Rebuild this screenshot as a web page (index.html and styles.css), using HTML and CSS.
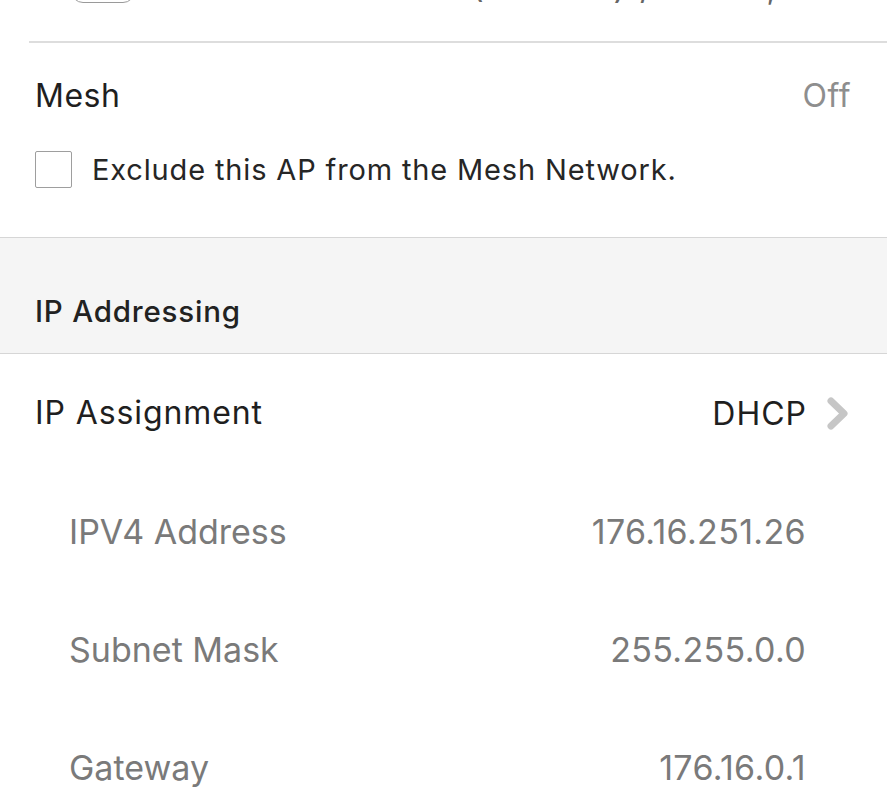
FILE: index.html
```html
<!DOCTYPE html>
<html>
<head>
<meta charset="utf-8">
<link rel="stylesheet" href="styles.css">
</head>
<body>
<div class="top-row">
  <div class="pill"></div>
  <div class="clipped-text">(2.4 GHz) / 5 GHz,</div>
</div>
<section class="mesh">
  <div class="mesh-head">
    <span class="title">Mesh</span>
    <span class="off">Off</span>
  </div>
  <label class="check-row">
    <span class="box"></span>
    <span class="check-label">Exclude this AP from the Mesh Network.</span>
  </label>
</section>
<div class="section-head">IP Addressing</div>
<div class="row main-row">
  <span class="title">IP Assignment</span>
  <span class="value">DHCP
    <svg class="chev" width="21" height="33" viewBox="0 0 21 33"><polyline points="4,4 17,16.5 4,29" fill="none" stroke="#c6c6c6" stroke-width="7" stroke-linecap="round" stroke-linejoin="round"/></svg>
  </span>
</div>
<div class="row sub-row"><span>IPV4 Address</span><span class="num">176.16.251.26</span></div>
<div class="row sub-row"><span>Subnet Mask</span><span class="num">255.255.0.0</span></div>
<div class="row sub-row"><span>Gateway</span><span class="num">176.16.0.1</span></div>
</body>
</html>
```
FILE: styles.css
```css
html, body {
  margin: 0;
  padding: 0;
  background: #ffffff;
  font-family: "Inter", "Noto Sans", sans-serif;
  color: #1f1f1f;
  overflow: hidden;
}
.top-row {
  height: 41px;
  margin-left: 29px;
  border-bottom: 2px solid #dddddd;
  display: flex;
  align-items: flex-start;
  overflow: hidden;
}
.pill {
  margin-left: 42px;
  margin-top: -37px;
  width: 62px;
  height: 38px;
  border: 1.5px solid #9a9a9a;
  border-radius: 12px;
  flex: none;
}
.clipped-text {
  margin-left: 337px;
  margin-top: -31px;
  font-size: 32px;
  line-height: 38px;
  color: #666;
  white-space: nowrap;
  word-spacing: 6px;
}
.mesh {
  border-bottom: 1px solid #d6d6d6;
  padding-bottom: 49px;
}
.mesh-head {
  display: flex;
  justify-content: space-between;
  align-items: center;
  padding: 34px 36px 0 35px;
  height: 38px;
}
.title {
  font-size: 32px;
  letter-spacing: 0.5px;
  line-height: 38px;
  color: #1f1f1f;
}
.off {
  font-size: 32px;
  letter-spacing: 0.5px;
  line-height: 38px;
  color: #8e8e8e;
}
.check-row {
  display: flex;
  align-items: center;
  margin-top: 35px;
  padding-left: 35px;
  height: 38px;
  gap: 20px;
}
.box {
  width: 35px;
  height: 35px;
  border: 1.5px solid #9e9e9e;
  border-radius: 2px;
  flex: none;
}
.check-label {
  font-size: 29px;
  letter-spacing: 0.85px;
  color: #262626;
}
.section-head {
  background: #f5f5f5;
  border-bottom: 1px solid #d6d6d6;
  height: 116px;
  box-sizing: border-box;
  padding: 54px 0 0 35px;
  font-size: 29.5px;
  letter-spacing: 0.8px;
  line-height: 38px;
  font-weight: 500;
  color: #222;
}
.row {
  display: flex;
  justify-content: space-between;
  align-items: center;
  height: 118px;
}
.main-row {
  padding: 0 39px 0 35px;
}
.value {
  display: flex;
  align-items: center;
  gap: 20px;
  font-size: 32px;
  letter-spacing: 1px;
  color: #1f1f1f;
}
.main-row .title {
  font-size: 32px;
  letter-spacing: 0.9px;
}
.sub-row {
  padding: 0 81px 0 69px;
  font-size: 34px;
  color: #7a7a7a;
}
.num {
  letter-spacing: 0.35px;
}
```
